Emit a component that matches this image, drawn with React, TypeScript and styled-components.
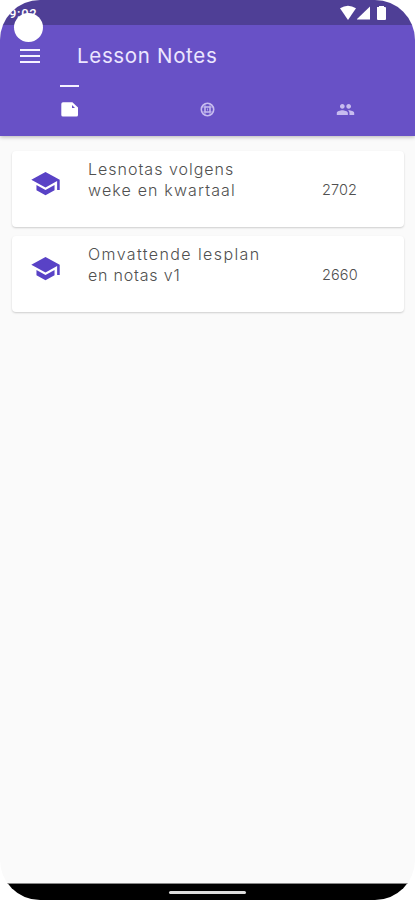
import React from 'react';
import styled, { createGlobalStyle } from 'styled-components';
import { MdSchool, MdPeople } from 'react-icons/md';

const GlobalStyle = createGlobalStyle`
  * { box-sizing: border-box; }
  body { margin: 0; background: #fff; font-family: Inter, "Open Sans", sans-serif; }
`;

const Phone = styled.div`
  width: 415px;
  height: 900px;
  overflow: hidden;
  display: flex;
  flex-direction: column;
  background: #fafafa;
  border-radius: 40px;
`;

const StatusBar = styled.header`
  position: relative;
  height: 25px;
  flex: none;
  display: flex;
  justify-content: flex-end;
  background: #4f3f96;
`;

const Clock = styled.span`
  position: absolute;
  left: 9px;
  top: 6px;
  font: 500 13px/15px Roboto, sans-serif;
  letter-spacing: 0.7px;
  color: #fff;
`;

const CameraHole = styled.span`
  position: absolute;
  left: 14px;
  top: 13px;
  width: 29px;
  height: 29px;
  border-radius: 50%;
  background: #fff;
`;

const StatusIcons = styled.svg`
  width: 50px;
  height: 18px;
  margin: 4px 25px 0 0;
  fill: #fff;
`;

const AppBar = styled.div`
  flex: none;
  height: 111px;
  background: #6851c6;
  box-shadow: 0 1px 4px rgba(0, 0, 0, 0.28);
`;

const TitleRow = styled.div`
  display: flex;
  align-items: center;
  height: 60px;
  padding-left: 20px;
`;

const MenuButton = styled.button`
  display: flex;
  flex-direction: column;
  gap: 4px;
  width: 20px;
  margin-top: 2px;
  padding: 0;
  border: 0;
  background: none;
`;

const MenuLine = styled.span`
  width: 20px;
  height: 2px;
  background: #f6f2ff;
`;

const Title = styled.h1`
  margin: 2px 0 0 37px;
  font-size: 20.5px;
  line-height: 28px;
  font-weight: 400;
  letter-spacing: 0.67px;
  color: #ece6ff;
  white-space: nowrap;
`;

const Tabs = styled.nav`
  display: grid;
  grid-template-columns: repeat(3, 1fr);
  height: 51px;
`;

const Tab = styled.button<{ $active?: boolean }>`
  display: flex;
  flex-direction: column;
  align-items: center;
  padding: 0;
  border: 0;
  background: none;
  color: ${(p) => (p.$active ? '#fff' : '#c7bcef')};
`;

const Indicator = styled.span<{ $active?: boolean }>`
  width: 19px;
  height: 2px;
  margin-bottom: 13px;
  background: ${(p) => (p.$active ? '#f5f1ff' : 'transparent')};
`;

const TabIcon = styled.span`
  display: flex;
  align-items: center;
  justify-content: center;
  height: 18px;
`;

const List = styled.main`
  flex: 1;
  display: flex;
  flex-direction: column;
  gap: 9px;
  padding: 15px 11px 0 12px;
`;

const Card = styled.article`
  display: flex;
  height: 76px;
  padding: 8px 0 0 18px;
  border-radius: 4px;
  background: #fff;
  box-shadow: 0 1px 2px rgba(0, 0, 0, 0.18);
`;

const School = styled(MdSchool)`
  width: 31px;
  height: 31px;
  margin-top: 9px;
  color: #5942c6;
`;

const Name = styled.div`
  display: flex;
  flex-direction: column;
  width: 234px;
  margin-left: 27px;
`;

const Line = styled.span<{ $track: number }>`
  font-size: 16px;
  line-height: 21px;
  font-weight: 300;
  letter-spacing: ${(p) => p.$track}px;
  color: #505050;
  white-space: nowrap;
`;

const Count = styled.span`
  margin-top: 20px;
  font-size: 14.5px;
  line-height: 21px;
  font-weight: 300;
  letter-spacing: 0.1px;
  color: #505050;
`;

const NavBar = styled.footer`
  flex: none;
  display: flex;
  justify-content: center;
  height: 17px;
  padding-top: 7px;
  border-top: 1px solid #888;
  background: #000;
`;

const HomeHandle = styled.span`
  width: 77px;
  height: 3px;
  border-radius: 2px;
  background: #ddd;
`;

const lessons = [
  {
    lines: [
      { text: 'Lesnotas volgens', track: 1.0 },
      { text: 'weke en kwartaal', track: 1.15 },
    ],
    count: '2702',
  },
  {
    lines: [
      { text: 'Omvattende lesplan', track: 1.4 },
      { text: 'en notas v1', track: 0.8 },
    ],
    count: '2660',
  },
];

export default function App() {
  return (
    <>
      <GlobalStyle />
      <Phone>
        <StatusBar>
          <Clock>9:02</Clock>
          <CameraHole />
          <StatusIcons viewBox="0 0 50 18">
            <path d="M0 4.3Q8-1 16 4.3L8 16Z" />
            <path d="M17 15.5V15L30 2.5v13Z" />
            <path d="M37 3h2V2h5v1h1q1 0 1 1v11q0 1-1 1h-7q-1 0-1-1Z" />
          </StatusIcons>
        </StatusBar>
        <AppBar>
          <TitleRow>
            <MenuButton aria-label="Menu">
              <MenuLine />
              <MenuLine />
              <MenuLine />
            </MenuButton>
            <Title>Lesson Notes</Title>
          </TitleRow>
          <Tabs>
            <Tab $active aria-label="Notes">
              <Indicator $active />
              <TabIcon>
                <svg width="17" height="15" viewBox="0 0 17 15" fill="currentColor">
                  <path d="M2 .3h9.4L17 5.6V13q0 1.5-1.5 1.5H2Q.3 14.5.3 13V2Q.3.3 2 .3Z" />
                  <path d="M11 3l3 3h-3Z" fill="#6851c6" />
                </svg>
              </TabIcon>
            </Tab>
            <Tab aria-label="Language">
              <Indicator />
              <TabIcon>
                <svg width="15" height="15" viewBox="0 0 15 15" fill="none" stroke="currentColor">
                  <circle cx="7.5" cy="7.5" r="6.2" strokeWidth="1.6" />
                  <rect x="5" y="5" width="5" height="5" strokeWidth="1.2" />
                  <path d="M5 2v11M10 2v11M2 5h11M2 10h11M7.5 6.5v2" strokeWidth=".8" />
                </svg>
              </TabIcon>
            </Tab>
            <Tab aria-label="People">
              <Indicator />
              <TabIcon>
                <MdPeople size={19} />
              </TabIcon>
            </Tab>
          </Tabs>
        </AppBar>
        <List>
          {lessons.map((lesson) => (
            <Card key={lesson.count}>
              <School />
              <Name>
                {lesson.lines.map((line) => (
                  <Line key={line.text} $track={line.track}>{line.text}</Line>
                ))}
              </Name>
              <Count>{lesson.count}</Count>
            </Card>
          ))}
        </List>
        <NavBar>
          <HomeHandle />
        </NavBar>
      </Phone>
    </>
  );
}
